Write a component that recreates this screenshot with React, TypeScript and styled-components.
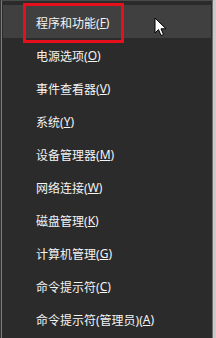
import React from 'react';
import styled, { createGlobalStyle } from 'styled-components';

const GlobalStyle = createGlobalStyle`
    html, body {
        margin: 0;
        padding: 0;
        background: #c9c9c9;
    }
    #root {
        width: 216px;
        height: 338px;
        overflow: hidden;
    }
`;

const Screen = styled.div`
    position: relative;
    width: 216px;
    height: 338px;
    display: flex;
    background: #c9c9c9;
`;

const Edge = styled.div`
    width: 1px;
    height: 100%;
    background: #353535;
`;

const Menu = styled.div`
    width: 212px;
    height: 100%;
    box-sizing: border-box;
    background: #2b2b2b;
    border-left: 1px solid #7c7c7c;
    border-right: 1px solid #6e6e6e;
    border-top: 1px solid #4a4a4a;
    padding: 4px 1px 0 1px;
    display: flex;
    flex-direction: column;
`;

const Row = styled.div<{ $active?: boolean }>`
    height: 33px;
    flex: 0 0 33px;
    display: flex;
    align-items: center;
    padding-left: 33px;
    padding-top: 2px;
    box-sizing: border-box;
    background: ${props => props.$active ? '#404040' : 'transparent'};
    color: #f4f4f4;
    font-family: 'Noto Sans', 'Noto Sans CJK SC', sans-serif;
    font-size: 12px;
    white-space: nowrap;
`;

const Key = styled.span`
    text-decoration: underline;
    text-underline-offset: 1px;
`;

const Highlight = styled.div`
    position: absolute;
    left: 23px;
    top: 3px;
    width: 101px;
    height: 40px;
    box-sizing: border-box;
    border: 3px solid #e5101c;
`;

const Pointer = styled.svg`
    position: absolute;
    left: 154px;
    top: 17px;
`;

const items = [
    { label: '程序和功能', key: 'F' },
    { label: '电源选项', key: 'O' },
    { label: '事件查看器', key: 'V' },
    { label: '系统', key: 'Y' },
    { label: '设备管理器', key: 'M' },
    { label: '网络连接', key: 'W' },
    { label: '磁盘管理', key: 'K' },
    { label: '计算机管理', key: 'G' },
    { label: '命令提示符', key: 'C' },
    { label: '命令提示符(管理员)', key: 'A' },
];

const App = function () {
    return <>
        <GlobalStyle />
        <Screen>
            <Edge />
            <Menu>
                {items.map((item, i) => (
                    <Row $active={i === 0} key={`${item.key}-row`}>
                        {item.label}(<Key>{item.key}</Key>)
                    </Row>
                ))}
            </Menu>
            <Highlight />
            <Pointer width="13" height="20" viewBox="0 0 13 20">
                <path d="M1 1 L1 16 L4.5 12.5 L7 18.5 L9.5 17.5 L7 11.8 L12 11.8 Z"
                    fill="#ffffff" stroke="#000000" strokeWidth="1" strokeLinejoin="round" />
            </Pointer>
        </Screen>
    </>;
};

export default App;
